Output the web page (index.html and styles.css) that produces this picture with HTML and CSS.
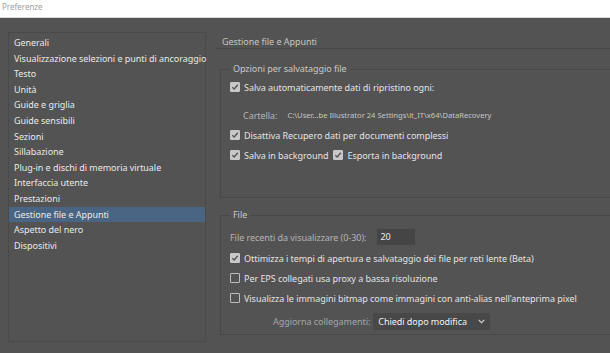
FILE: index.html
```html
<!DOCTYPE html>
<html lang="it">
<head>
<meta charset="utf-8">
<title>Preferenze</title>
<link rel="stylesheet" href="styles.css">
</head>
<body>
<div class="titlebar">Preferenze</div>
<div class="main">
  <ul class="sidebar">
    <li>Generali</li>
    <li>Visualizzazione selezioni e punti di ancoraggio</li>
    <li>Testo</li>
    <li>Unità</li>
    <li>Guide e griglia</li>
    <li>Guide sensibili</li>
    <li>Sezioni</li>
    <li>Sillabazione</li>
    <li>Plug-in e dischi di memoria virtuale</li>
    <li>Interfaccia utente</li>
    <li>Prestazioni</li>
    <li class="selected">Gestione file e Appunti</li>
    <li>Aspetto del nero</li>
    <li>Dispositivi</li>
  </ul>
  <div class="content">
    <div class="page-title">Gestione file e Appunti</div>
    <fieldset class="group group-save">
      <legend>Opzioni per salvataggio file</legend>
      <div class="row r1"><span class="cb checked"></span><span>Salva automaticamente dati di ripristino ogni:</span></div>
      <div class="row path-row"><span class="dim">Cartella:</span><span class="path">C:\User...be Illustrator 24 Settings\it_IT\x64\DataRecovery</span></div>
      <div class="row r3"><span class="cb checked"></span><span>Disattiva Recupero dati per documenti complessi</span></div>
      <div class="row r4"><span class="cb checked"></span><span>Salva in background</span><span class="cb checked second"></span><span>Esporta in background</span></div>
    </fieldset>
    <fieldset class="group group-file">
      <legend>File</legend>
      <div class="row recent"><span class="dim">File recenti da visualizzare (0-30):</span><span class="input">20</span></div>
      <div class="row"><span class="cb checked"></span><span>Ottimizza i tempi di apertura e salvataggio dei file per reti lente (Beta)</span></div>
      <div class="row"><span class="cb"></span><span>Per EPS collegati usa proxy a bassa risoluzione</span></div>
      <div class="row"><span class="cb"></span><span>Visualizza le immagini bitmap come immagini con anti-alias nell'anteprima pixel</span></div>
      <div class="row links"><span class="dim">Aggiorna collegamenti:</span><span class="select">Chiedi dopo modifica<svg class="chev" width="7" height="5" viewBox="0 0 7 5"><path d="M0.8 1 L3.5 3.7 L6.2 1" fill="none" stroke="#cfcfcf" stroke-width="1.1"/></svg></span></div>
    </fieldset>
  </div>
</div>
</body>
</html>
```
FILE: styles.css
```css
* { box-sizing: border-box; }
html, body { margin: 0; padding: 0; }
body {
  width: 610px;
  height: 353px;
  overflow: hidden;
  background: #535353;
  font-family: "Noto Sans", "Open Sans", sans-serif;
  font-size: 9px;
  letter-spacing: -0.05px;
  color: #dcdcdc;
}
.titlebar {
  height: 18px;
  background: #ffffff;
  color: #a0a0a0;
  font-size: 8px;
  letter-spacing: 0;
  line-height: 14px;
  padding-left: 2px;
  border-bottom: 1px solid #d8d8d8;
}
.main {
  display: flex;
  padding: 14px 0 0 8px;
}
.sidebar {
  list-style: none;
  margin: 0;
  padding: 2px 0 0 0;
  width: 198px;
  height: 310px;
  border: 1px solid #4a4a4a;
  flex: none;
}
.sidebar li {
  height: 15.6px;
  line-height: 15.6px;
  padding-left: 5px;
  color: #e8e8e8;
  white-space: nowrap;
}
.sidebar li.selected {
  background: #4a6584;
}
.content {
  flex: none;
  width: 420px;
  margin-left: 10px;
}
.page-title {
  height: 13px;
  line-height: 12px;
  margin-top: 4px;
  padding-left: 6px;
  color: #c4c4c4;
  border-bottom: 1px solid #484848;
}
.group {
  margin: 0 0 0 4px;
  border: 1px solid #484848;
  border-right: none;
  padding: 0 0 0 9px;
}
.group legend {
  padding: 0 3px;
  margin-left: 0;
  color: #c8c8c8;
  line-height: 12px;
}
.group-save {
  margin-top: 14px;
  height: 135px;
}
.group-file {
  margin-top: 11px;
  height: 126px;
}
.row {
  display: flex;
  align-items: center;
  white-space: nowrap;
  color: #e2e2e2;
  height: 16px;
}
.group-save .r1 { margin-top: 4px; }
.group-save .path-row { margin-top: 12px; padding-left: 13px; }
.group-save .r3 { margin-top: 4px; }
.group-save .r4 { margin-top: 4px; }
.group-file .row { height: 20px; }
.group-file .recent { height: 22px; margin-top: 5px; }
.cb {
  width: 10px;
  height: 10px;
  border: 1px solid #bdbdbd;
  border-radius: 1px;
  margin-right: 4px;
  flex: none;
}
.cb.checked {
  background: #c8c8c8 no-repeat center/8px 8px url("data:image/svg+xml,%3Csvg xmlns='http://www.w3.org/2000/svg' viewBox='0 0 8 8'%3E%3Cpath d='M1.3 4.2 L3.2 6 L6.8 1.8' fill='none' stroke='%23555555' stroke-width='1.4'/%3E%3C/svg%3E");
  border-color: #c8c8c8;
}
.cb.second { margin-left: 5px; }
.dim { color: #b4b4b4; }
.path {
  margin-left: 10px;
  font-size: 7.6px;
  letter-spacing: 0;
  color: #c6c6c6;
}
.input {
  margin-left: 11px;
  width: 38px;
  height: 16px;
  line-height: 16px;
  background: #454545;
  color: #f0f0f0;
  padding-left: 3px;
}
.links {
  margin-top: 3px;
  padding-left: 43px;
}
.links .dim { color: #a6a6a6; }
.select {
  margin-left: 3px;
  width: 117px;
  height: 17px;
  background: #484848;
  color: #f2f2f2;
  padding-left: 5px;
  display: flex;
  align-items: center;
  justify-content: space-between;
  padding-right: 5px;
}
.chev { flex: none; }
```
